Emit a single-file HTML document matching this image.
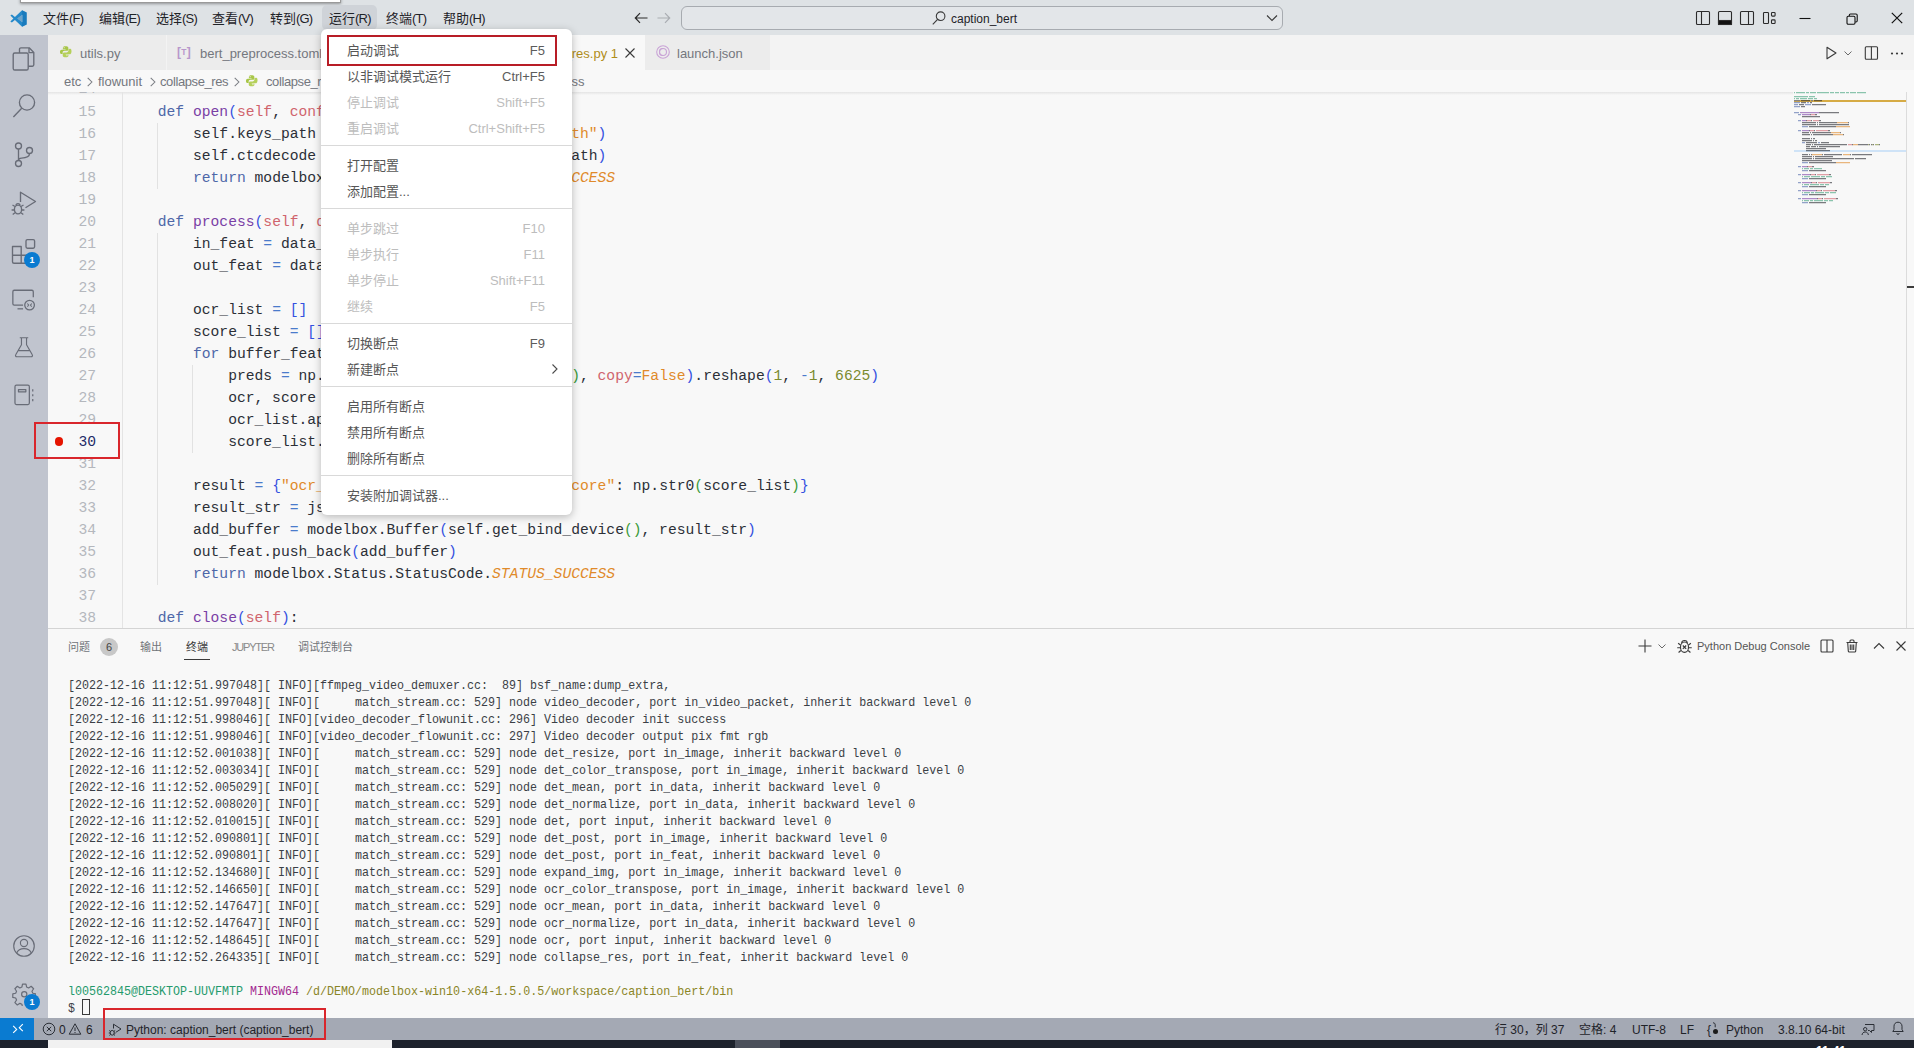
<!DOCTYPE html>
<html lang="zh-CN">
<head>
<meta charset="utf-8">
<title>caption_bert - Visual Studio Code</title>
<style>
*{box-sizing:border-box;margin:0;padding:0}
html,body{width:1914px;height:1048px;overflow:hidden;background:#f8f8f8}
body{position:relative;font-family:"Liberation Sans","Noto Sans CJK SC",sans-serif;font-size:13px;color:#333;}
.abs{position:absolute}
.ui{font-family:"Liberation Sans","Noto Sans CJK SC",sans-serif}
.mono{font-family:"Liberation Mono","Noto Sans CJK SC",monospace}
/* title bar */
#titlebar{position:absolute;left:0;top:0;width:1914px;height:35px;background:#dee2e5}
.mi{position:absolute;top:0;height:35px;line-height:37px;font-size:13px;color:#1f2328;white-space:nowrap}
/* activity bar */
#activity{position:absolute;left:0;top:35px;width:48px;height:983px;background:#c0c4ce}
/* tabs */
#tabs{position:absolute;left:48px;top:35px;width:1866px;height:35px;background:#f3f3f3}
.tab{position:absolute;top:0;height:35px;background:#ececec;line-height:37px;font-size:13px;color:#74777e;white-space:nowrap}
#crumbs{position:absolute;left:48px;top:70px;width:1866px;height:22px;background:#f8f8f8;line-height:24px;font-size:13px;color:#74777e;white-space:nowrap}
/* editor */
#editor{position:absolute;left:48px;top:92px;width:1866px;height:536px;background:#f8f8f8;overflow:hidden}
.ln{position:absolute;left:0;width:48px;text-align:right;font-size:14.66px;line-height:22px;height:22px;color:#b4b7bd;white-space:pre}
.cl{position:absolute;left:74.6px;font-size:14.66px;line-height:22px;height:22px;color:#2b2f37;white-space:pre}
.k{color:#4e67a8}.f{color:#7a3fa5}.p{color:#d0646d}.b1{color:#3450e0}.b2{color:#3a9a3a}.s{color:#e08a2a}.o{color:#4a7bcb}.n{color:#7a8a2e}.c{color:#e08a2a;font-style:italic}
/* panel */
#panel{position:absolute;left:48px;top:628px;width:1866px;height:390px;background:#f8f8f8;border-top:1px solid #d4d4d4}
.tl{position:absolute;left:20px;font-size:13px;line-height:17px;height:17px;color:#3b3f46;white-space:pre;transform-origin:0 50%;transform:scaleX(.8975)}
.ptab{top:0;font-size:11px;line-height:36px;color:#707479;white-space:nowrap}
/* status */
#status{position:absolute;left:0;top:1018px;width:1914px;height:22px;background:#a4a9b4;color:#1f2329;font-size:12px;line-height:24px;white-space:nowrap}
#taskbar{position:absolute;left:0;top:1040px;width:1914px;height:8px;background:#1d222c}
/* menu */
#menu{position:absolute;left:321px;top:29px;width:251px;height:486px;background:#fff;border-radius:6px;box-shadow:0 2px 8px rgba(0,0,0,.26)}
.it{position:absolute;left:26px;font-size:13px;line-height:27px;height:26px;color:#565656;white-space:nowrap}
.sc{position:absolute;right:27px;font-size:13px;line-height:27px;height:26px;color:#5c5c5c;white-space:nowrap}
.dis{color:#bdbdbd}
.sep{position:absolute;left:0;width:251px;height:1px;background:#d9d9d9}
</style>
</head>
<body>
<div id="titlebar">
  <!-- remnant of a popup above -->
  <div class="abs" style="left:20px;top:-4px;width:321px;height:7px;background:#fff;border:1px solid #9a9a9a;box-shadow:0 1px 3px rgba(0,0,0,.35)"></div>
  <!-- vscode logo -->
  <svg class="abs" style="left:10px;top:10px" width="17" height="17" viewBox="0 0 100 100">
    <path d="M71 2 L29 41 L11 27 L2 32 L20 50 L2 68 L11 73 L29 59 L71 98 L98 86 L98 14 Z M73 28 L73 72 L43 50 Z" fill="#2489ca" fill-rule="evenodd"/>
    <path d="M71 2 L98 14 L98 86 L71 98 Z M73 28 L73 72 L43 50 Z" fill="#1070b3" fill-rule="evenodd" opacity=".55"/>
  </svg>
  <div class="abs" style="left:322px;top:5px;width:55px;height:25px;background:#cfd3d8;border-radius:5px"></div>
  <div class="mi" style="left:43px">文件<span style="letter-spacing:-.8px">(F)</span></div>
  <div class="mi" style="left:99px">编辑<span style="letter-spacing:-.8px">(E)</span></div>
  <div class="mi" style="left:156px">选择<span style="letter-spacing:-.8px">(S)</span></div>
  <div class="mi" style="left:212px">查看<span style="letter-spacing:-.8px">(V)</span></div>
  <div class="mi" style="left:270px">转到<span style="letter-spacing:-.8px">(G)</span></div>
  <div class="mi" style="left:329px">运行<span style="letter-spacing:-.8px">(R)</span></div>
  <div class="mi" style="left:386px">终端<span style="letter-spacing:-.8px">(T)</span></div>
  <div class="mi" style="left:443px">帮助<span style="letter-spacing:-.8px">(H)</span></div>
  <!-- nav arrows -->
  <svg class="abs" style="left:633px;top:10px" width="16" height="16" viewBox="0 0 16 16" fill="none" stroke="#2b2b2b" stroke-width="1.2"><path d="M14.5 8H2.5M7 3.2 2.3 8 7 12.8"/></svg>
  <svg class="abs" style="left:656px;top:10px" width="16" height="16" viewBox="0 0 16 16" fill="none" stroke="#a9adb2" stroke-width="1.2"><path d="M1.5 8h12M9 3.2 13.7 8 9 12.8"/></svg>
  <!-- command center -->
  <div class="abs" style="left:681px;top:6px;width:602px;height:24px;border:1px solid #a7abb0;border-radius:6px;background:#e3e6e9"></div>
  <svg class="abs" style="left:931px;top:10px" width="16" height="16" viewBox="0 0 16 16" fill="none" stroke="#3a3a3a" stroke-width="1.1"><circle cx="9.6" cy="6.2" r="4.3"/><path d="M6.6 9.4 1.8 14.4"/></svg>
  <div class="abs" style="left:951px;top:0;height:35px;line-height:38px;font-size:12px;color:#1f2328;white-space:nowrap">caption_bert</div>
  <svg class="abs" style="left:1264px;top:10px" width="16" height="16" viewBox="0 0 16 16" fill="none" stroke="#3a3a3a" stroke-width="1.1"><path d="M3 5.5 8 10.5 13 5.5"/></svg>
  <!-- layout controls -->
  <svg class="abs" style="left:1695px;top:10px" width="16" height="16" viewBox="0 0 16 16" fill="none" stroke="#2b2b2b" stroke-width="1.1"><rect x="1.5" y="1.5" width="13" height="13" rx="1"/><path d="M6.5 1.5v13"/></svg>
  <svg class="abs" style="left:1717px;top:10px" width="16" height="16" viewBox="0 0 16 16" fill="none" stroke="#2b2b2b" stroke-width="1.1"><rect x="1.5" y="1.5" width="13" height="13" rx="1"/><rect x="1.5" y="10.500" width="13" height="4" fill="#111"/></svg>
  <svg class="abs" style="left:1739px;top:10px" width="16" height="16" viewBox="0 0 16 16" fill="none" stroke="#2b2b2b" stroke-width="1.1"><rect x="1.5" y="1.5" width="13" height="13" rx="1"/><path d="M9.5 1.5v13"/></svg>
  <svg class="abs" style="left:1761px;top:10px" width="16" height="16" viewBox="0 0 16 16" fill="none" stroke="#2b2b2b" stroke-width="1.1"><rect x="2.5" y="2.5" width="5" height="11" rx=".8"/><rect x="10.5" y="2.5" width="3.6" height="3.6" rx=".8"/><rect x="10.5" y="9.9" width="3.6" height="3.6" rx=".8"/></svg>
  <!-- window controls -->
  <svg class="abs" style="left:1799px;top:12px" width="12" height="12" viewBox="0 0 12 12" stroke="#111" stroke-width="1.1" fill="none"><path d="M.5 6.5h11"/></svg>
  <svg class="abs" style="left:1846px;top:12.500px" width="12" height="12" viewBox="0 0 12 12" stroke="#111" stroke-width="1.1" fill="none"><rect x="1" y="3.2" width="8" height="8" rx="1.2"/><path d="M3.3 3V2.2a1.2 1.2 0 0 1 1.2-1.2H10a1.2 1.2 0 0 1 1.2 1.2v5.6a1.2 1.2 0 0 1-1.2 1.2h-.8"/></svg>
  <svg class="abs" style="left:1891px;top:12px" width="12" height="12" viewBox="0 0 12 12" stroke="#111" stroke-width="1.2" fill="none"><path d="M.8.8l10.4 10.4M11.2.8.8 11.2"/></svg>
</div>
<div id="activity">
  <!-- files -->
  <svg class="abs" style="left:11px;top:10px" width="26" height="28" viewBox="0 0 26 28" fill="none" stroke="#686c77" stroke-width="1.35" stroke-linejoin="round"><path d="M8.5 8V4.2a1.4 1.4 0 0 1 1.4-1.4h8.3l4.6 4.6v12.4a1.4 1.4 0 0 1-1.4 1.4h-4.2"/><path d="M18 3v4.6h4.6"/><rect x="2.2" y="8" width="15" height="17" rx="1.6"/></svg>
  <!-- search -->
  <svg class="abs" style="left:11px;top:58px" width="26" height="26" viewBox="0 0 26 26" fill="none" stroke="#686c77" stroke-width="1.35"><circle cx="16" cy="9.5" r="7.6"/><path d="M10.7 15.2 2.4 24"/></svg>
  <!-- scm -->
  <svg class="abs" style="left:12px;top:106px" width="24" height="28" viewBox="0 0 24 28" fill="none" stroke="#686c77" stroke-width="1.35"><circle cx="6.5" cy="5" r="3"/><circle cx="6.5" cy="22.5" r="3"/><circle cx="17.5" cy="9.5" r="3"/><path d="M6.5 8v11.5M17.5 12.5c0 4-4 4.5-8 4.6-2 .1-3 1-3 2.4"/></svg>
  <!-- debug -->
  <svg class="abs" style="left:10px;top:154px" width="28" height="28" viewBox="0 0 28 28" fill="none" stroke="#686c77" stroke-width="1.35" stroke-linejoin="round"><path d="M10.5 13V3.2l15 9.3-10 6.2"/><ellipse cx="8" cy="20.5" rx="3.6" ry="4.4"/><path d="M5 17.5 2.5 16M11 17.5l2.5-1.5M4.4 21H1.6M11.6 21h2.8M5 23.8l-2.3 1.7M11 23.8l2.3 1.7M6 16.6a2 2 0 0 1 4 0"/></svg>
  <!-- extensions -->
  <svg class="abs" style="left:10px;top:202px" width="28" height="28" viewBox="0 0 28 28" fill="none" stroke="#686c77" stroke-width="1.35" stroke-linejoin="round"><path d="M2.5 9.5h8.7v8.7H2.5zM2.500 18.2h8.7v8h-7.2a1.500 1.500 0 0 1-1.500-1.500zM11.200 18.2h8.500v6.500a1.500 1.500 0 0 1-1.500 1.500h-7z"/><rect x="16" y="2.6" width="8.6" height="8.6" rx="1.4"/></svg>
  <div class="abs" style="left:24px;top:216.500px;width:16px;height:16px;border-radius:8px;background:#0a7bd1;color:#fff;font-size:9px;font-weight:bold;line-height:16px;text-align:center">1</div>
  <!-- remote explorer -->
  <svg class="abs" style="left:11.100px;top:251.700px" width="26" height="26" viewBox="0 0 28 28" fill="none" stroke="#686c77" stroke-width="1.35" stroke-linejoin="round"><path d="M13 19.500H3.500a1.500 1.500 0 0 1-1.500-1.500V5a1.500 1.500 0 0 1 1.500-1.500H22.500A1.500 1.500 0 0 1 24 5v6"/><path d="M7 23.500h6"/><circle cx="20" cy="19.500" r="5.200"/><path d="M17.600 17.800l1.500 1.700-1.500 1.700M22.400 17.800 20.900 19.500l1.500 1.700" stroke-width="1.100"/></svg>
  <!-- flask -->
  <svg class="abs" style="left:13px;top:300px" width="22" height="23.700" viewBox="0 0 26 28" fill="none" stroke="#686c77" stroke-width="1.35" stroke-linejoin="round"><path d="M8 3.200h10M10 3.200v8.300L3.200 23.400a1.500 1.500 0 0 0 1.300 2.300h17a1.500 1.500 0 0 0 1.300-2.300L16 11.500V3.200M6.500 18.500h13"/></svg>
  <!-- notebook -->
  <svg class="abs" style="left:12.400px;top:346.800px" width="24" height="25.800" viewBox="0 0 26 28" fill="none" stroke="#686c77" stroke-width="1.35" stroke-linejoin="round"><rect x="3.200" y="3.500" width="15.600" height="21" rx="1.600"/><path d="M7 8.200h8v2.400H7zM22.500 8v2.400M22.500 13.200v2.400M22.500 18.400v2.400"/></svg>
  <!-- account -->
  <svg class="abs" style="left:12px;top:898.5px" width="24" height="24" viewBox="0 0 28 28" fill="none" stroke="#686c77" stroke-width="1.35"><circle cx="14" cy="14" r="12"/><circle cx="14" cy="10.500" r="4.200"/><path d="M5.500 22.300c1.500-4 5-5.300 8.500-5.300s7 1.300 8.500 5.300"/></svg>
  <!-- gear -->
  <svg class="abs" style="left:11.500px;top:946.5px" width="24.500" height="24.500" viewBox="0 0 28 28" fill="none" stroke="#686c77" stroke-width="1.35" stroke-linejoin="round"><circle cx="14" cy="14" r="3"/><path d="M12 2.500h4l.7 3.300 2.300 1 2.900-1.900 2.800 2.800-1.900 2.900 1 2.300 3.300.7v4l-3.300.7-1 2.300 1.900 2.900-2.800 2.800-2.900-1.900-2.300 1-.7 3.300h-4l-.7-3.300-2.300-1-2.900 1.900-2.800-2.800 1.900-2.900-1-2.300-3.300-.7v-4l3.300-.7 1-2.300-1.900-2.900 2.800-2.800 2.900 1.900 2.300-1z"/></svg>
  <div class="abs" style="left:24px;top:959px;width:16px;height:16px;border-radius:8px;background:#0a7bd1;color:#fff;font-size:9px;font-weight:bold;line-height:16px;text-align:center">1</div>
</div>
<div id="tabs">
  <!-- python icon macro via svg -->
  <div class="tab" style="left:0;width:118px"><svg class="abs" style="left:11px;top:10px" width="13" height="13" viewBox="0 0 16 16"><path d="M7.800 1.500c-2.200 0-3 .8-3 2v1.700h3.300v.6H3.400c-1.300 0-2.200 1-2.200 2.700s.8 2.600 2 2.600h1.300V9.300c0-1.200 1-2.100 2.200-2.100h3c1 0 1.800-.8 1.800-1.800V3.500c0-1.100-1-2-2.200-2zM6.300 2.600a.6.6 0 1 1 0 1.300.6.600 0 0 1 0-1.300z" fill="#a8c648"/><path d="M11.600 5.200v1.700c0 1.300-1 2.200-2.200 2.200h-3c-1 0-1.800.8-1.800 1.800v2.300c0 1 1 1.600 2.200 1.800 1.400.2 2.600 0 3 0 1-.2 1.800-.7 1.800-1.800v-1.200H8.300v-.6h4.900c1.200 0 1.700-.9 2-2.200.3-1.300.3-2.400 0-3.200-.3-.8-.8-1.300-2-1.300zM9.800 12.400a.6.600 0 1 1 0 1.300.6.600 0 0 1 0-1.300z" fill="#b5d05a"/></svg><span class="abs" style="left:32px">utils.py</span></div>
  <div class="abs" style="left:118px;top:0;width:1px;height:35px;background:#f3f3f3"></div>
  <div class="tab" style="left:119px;width:160px"><span class="abs" style="left:10px;top:-1px;font-size:12px;font-weight:700;color:#b797cb;letter-spacing:.3px">[<span style="font-size:8.500px;position:relative;top:-1px">T</span>]</span><span class="abs" style="left:33px">bert_preprocess.toml</span></div>
  <div class="tab" style="left:280px;width:317px;background:#f8f8f8;color:#b08d18"><span class="abs" style="right:27px">collapse_res.py 1</span>
    <svg class="abs" style="left:296px;top:12px" width="12" height="12" viewBox="0 0 12 12" stroke="#3a3a3a" stroke-width="1.100" fill="none"><path d="M1.500 1.500l9 9M10.500 1.500l-9 9"/></svg></div>
  <div class="tab" style="left:597px;width:125px"><svg class="abs" style="left:10px;top:9px" width="16" height="16" viewBox="0 0 16 16" fill="none" stroke="#c9a3d6" stroke-width="1.100"><circle cx="8" cy="8" r="6.300"/><circle cx="8" cy="8" r="3.500"/><path d="M8 4.500a3.500 3.500 0 0 0 0 7"/></svg><span class="abs" style="left:32px">launch.json</span></div>
  <!-- editor actions -->
  <svg class="abs" style="left:1775px;top:10px" width="16" height="16" viewBox="0 0 16 16" fill="none" stroke="#3a3a3a" stroke-width="1.100" stroke-linejoin="round"><path d="M4 2.200 13 8l-9 5.800z"/></svg>
  <svg class="abs" style="left:1794px;top:12px" width="12" height="12" viewBox="0 0 12 12" fill="none" stroke="#6a6a6a" stroke-width="1"><path d="M2.500 4.500 6 8l3.500-3.500"/></svg>
  <svg class="abs" style="left:1815px;top:10px" width="16" height="16" viewBox="0 0 16 16" fill="none" stroke="#3a3a3a" stroke-width="1.100"><rect x="2.300" y="1.800" width="12.200" height="12.400" rx="1"/><path d="M8.400 1.800v12.400"/></svg>
  <svg class="abs" style="left:1841px;top:10px" width="16" height="16" viewBox="0 0 16 16" fill="#3a3a3a"><circle cx="3" cy="8.500" r="1.100"/><circle cx="8" cy="8.500" r="1.100"/><circle cx="13" cy="8.500" r="1.100"/></svg>
</div>
<div id="crumbs">
  <span class="abs" style="left:16px">etc</span>
<svg class="abs" style="left:38px;top:6px" width="8" height="12" viewBox="0 0 8 12" fill="none" stroke="#7a7d83" stroke-width="1.050"><path d="M1.700 1.800 5.900 6l-4.200 4.200"/></svg>
  <span class="abs" style="left:50px">flowunit</span>
<svg class="abs" style="left:100.5px;top:6px" width="8" height="12" viewBox="0 0 8 12" fill="none" stroke="#7a7d83" stroke-width="1.050"><path d="M1.700 1.800 5.900 6l-4.200 4.200"/></svg>
  <span class="abs" style="left:112px;letter-spacing:-.4px">collapse_res</span>
<svg class="abs" style="left:185px;top:6px" width="8" height="12" viewBox="0 0 8 12" fill="none" stroke="#7a7d83" stroke-width="1.050"><path d="M1.700 1.800 5.900 6l-4.200 4.200"/></svg>
<svg class="abs" style="left:197px;top:4px" width="13" height="13" viewBox="0 0 16 16"><path d="M7.800 1.500c-2.200 0-3 .8-3 2v1.700h3.300v.6H3.400c-1.300 0-2.200 1-2.200 2.700s.8 2.600 2 2.600h1.300V9.300c0-1.200 1-2.100 2.200-2.100h3c1 0 1.800-.8 1.800-1.800V3.500c0-1.100-1-2-2.200-2zM6.300 2.600a.6.600 0 1 1 0 1.300.6.600 0 0 1 0-1.300z" fill="#a8c648"/><path d="M11.600 5.200v1.700c0 1.300-1 2.200-2.200 2.200h-3c-1 0-1.800.8-1.800 1.800v2.300c0 1 1 1.600 2.200 1.800 1.400.2 2.600 0 3 0 1-.2 1.800-.7 1.800-1.800v-1.200H8.300v-.6h4.900c1.200 0 1.700-.9 2-2.200.3-1.300.3-2.400 0-3.200-.3-.8-.8-1.300-2-1.300zM9.800 12.400a.6.600 0 1 1 0 1.300.6.600 0 0 1 0-1.300z" fill="#b5d05a"/></svg>
  <span class="abs" style="left:218px;letter-spacing:-.4px">collapse_res.py</span>
  <span class="abs" style="left:330px">CollapseResFlowunit</span>
  <span class="abs" style="left:491px">process</span>
</div>
<div id="editor">
<div class="abs" style="left:0;top:0;width:1745px;height:3px;background:linear-gradient(#e4e4e4,rgba(228,228,228,0))"></div>
<div class="ln mono" style="top:-14px">14</div>
<div class="abs" style="left:74px;top:0;width:1px;height:536px;background:#e4e4e4"></div>
<div class="abs" style="left:109px;top:31px;width:1px;height:66px;background:#e2e2e2"></div>
<div class="abs" style="left:109px;top:141px;width:1px;height:352px;background:#e2e2e2"></div>
<div class="abs" style="left:144px;top:273px;width:1px;height:88px;background:#e2e2e2"></div>
<div class="ln mono" style="top:9px">15</div>
<div class="cl mono" style="top:9px">    <span class="k">def</span> <span class="f">open</span><span class="b1">(</span><span class="p">self</span>, <span class="p">config</span><span class="b1">)</span>:</div>
<div class="ln mono" style="top:31px">16</div>
<div class="cl mono" style="top:31px">        self.keys_path <span class="o">=</span> config.get_string<span class="b1">(</span><span class="s">&quot;keys_path&quot;</span><span class="b1">)</span></div>
<div class="ln mono" style="top:53px">17</div>
<div class="cl mono" style="top:53px">        self.ctcdecode <span class="o">=</span> CTCLabelDecode<span class="b1">(</span>self.keys_path<span class="b1">)</span></div>
<div class="ln mono" style="top:75px">18</div>
<div class="cl mono" style="top:75px">        <span class="k">return</span> modelbox.Status.StatusCode.<span class="c">STATUS_SUCCESS</span></div>
<div class="ln mono" style="top:97px">19</div>
<div class="ln mono" style="top:119px">20</div>
<div class="cl mono" style="top:119px">    <span class="k">def</span> <span class="f">process</span><span class="b1">(</span><span class="p">self</span>, <span class="p">data_context</span><span class="b1">)</span>:</div>
<div class="ln mono" style="top:141px">21</div>
<div class="cl mono" style="top:141px">        in_feat <span class="o">=</span> data_context.input<span class="b1">(</span><span class="s">&quot;in_feat&quot;</span><span class="b1">)</span></div>
<div class="ln mono" style="top:163px">22</div>
<div class="cl mono" style="top:163px">        out_feat <span class="o">=</span> data_context.output<span class="b1">(</span><span class="s">&quot;out_feat&quot;</span><span class="b1">)</span></div>
<div class="ln mono" style="top:185px">23</div>
<div class="ln mono" style="top:207px">24</div>
<div class="cl mono" style="top:207px">        ocr_list <span class="o">=</span> <span class="b1">[]</span></div>
<div class="ln mono" style="top:229px">25</div>
<div class="cl mono" style="top:229px">        score_list <span class="o">=</span> <span class="b1">[]</span></div>
<div class="ln mono" style="top:251px">26</div>
<div class="cl mono" style="top:251px">        <span class="k">for</span> buffer_feat <span class="k">in</span> in_feat:</div>
<div class="ln mono" style="top:273px">27</div>
<div class="cl mono" style="top:273px">            preds <span class="o">=</span> np.array<span class="b1">(</span>buffer_feat.as_object<span class="b2">()</span>, <span class="p">copy</span><span class="o">=</span><span class="s">False</span><span class="b1">)</span>.reshape<span class="b1">(</span><span class="n">1</span>, <span class="o">-</span><span class="n">1</span>, <span class="n">6625</span><span class="b1">)</span></div>
<div class="ln mono" style="top:295px">28</div>
<div class="cl mono" style="top:295px">            ocr, score <span class="o">=</span> self.ctcdecode<span class="b1">(</span>preds<span class="b1">)</span></div>
<div class="ln mono" style="top:317px">29</div>
<div class="cl mono" style="top:317px">            ocr_list.append<span class="b1">(</span>ocr<span class="b1">)</span></div>
<div class="ln mono" style="top:339px">30</div>
<div class="cl mono" style="top:339px">            score_list.append<span class="b1">(</span>score<span class="b1">)</span></div>
<div class="ln mono" style="top:361px">31</div>
<div class="ln mono" style="top:383px">32</div>
<div class="cl mono" style="top:383px">        result <span class="o">=</span> <span class="b1">{</span><span class="s">&quot;ocr_list&quot;</span>: np.str0<span class="b2">(</span>ocr_list<span class="b2">)</span>, <span class="s">&quot;score&quot;</span>: np.str0<span class="b2">(</span>score_list<span class="b2">)</span><span class="b1">}</span></div>
<div class="ln mono" style="top:405px">33</div>
<div class="cl mono" style="top:405px;width:212px;overflow:hidden">        result_str <span class="o">=</span> json.dumps<span class="b1">(</span>result<span class="b1">)</span></div>
<div class="ln mono" style="top:427px">34</div>
<div class="cl mono" style="top:427px">        add_buffer <span class="o">=</span> modelbox.Buffer<span class="b1">(</span>self.get_bind_device<span class="b2">()</span>, result_str<span class="b1">)</span></div>
<div class="ln mono" style="top:449px">35</div>
<div class="cl mono" style="top:449px">        out_feat.push_back<span class="b1">(</span>add_buffer<span class="b1">)</span></div>
<div class="ln mono" style="top:471px">36</div>
<div class="cl mono" style="top:471px">        <span class="k">return</span> modelbox.Status.StatusCode.<span class="c">STATUS_SUCCESS</span></div>
<div class="ln mono" style="top:493px">37</div>
<div class="ln mono" style="top:515px">38</div>
<div class="cl mono" style="top:515px">    <span class="k">def</span> <span class="f">close</span><span class="b1">(</span><span class="p">self</span><span class="b1">)</span>:</div>
<div class="abs" style="left:1746px;top:8px;width:113px;height:2px;background:#d6ab45"></div>
<div class="abs" style="left:1746px;top:58px;width:113px;height:2px;background:#cfe3f7"></div>
<svg class="abs" style="left:1746px;top:0" width="113" height="130" viewBox="0 0 113 130" opacity=".85" fill="none" stroke-width="1.300" stroke-dasharray=".7 .3"><path d="M0 0.65h1" stroke="#3fa37a"/><path d="M2 0.65h9" stroke="#3fa37a"/><path d="M12 0.65h3" stroke="#3fa37a"/><path d="M16 0.65h6" stroke="#3fa37a"/><path d="M23 0.65h12" stroke="#3fa37a"/><path d="M36 0.65h4" stroke="#3fa37a"/><path d="M41 0.65h4" stroke="#3fa37a"/><path d="M46 0.65h5" stroke="#3fa37a"/><path d="M52 0.65h3" stroke="#3fa37a"/><path d="M56 0.65h6" stroke="#3fa37a"/><path d="M63 0.65h9" stroke="#3fa37a"/><path d="M0 4.65h14" stroke="#3fa37a"/><path d="M15 4.65h6" stroke="#3fa37a"/><path d="M0 6.65h1" stroke="#3fa37a"/><path d="M2 6.65h3" stroke="#3fa37a"/><path d="M6 6.65h7" stroke="#3fa37a"/><path d="M14 6.65h5" stroke="#3fa37a"/><path d="M20 6.65h3" stroke="#3fa37a"/><path d="M0 8.65h6" stroke="#4e67a8"/><path d="M7 8.65h9" stroke="#23262c"/><path d="M17 8.65h2" stroke="#4e67a8"/><path d="M20 8.65h8" stroke="#23262c"/><path d="M0 10.65h6" stroke="#4e67a8"/><path d="M7 10.65h5" stroke="#23262c"/><path d="M13 10.65h2" stroke="#4e67a8"/><path d="M16 10.65h2" stroke="#23262c"/><path d="M0 12.65h4" stroke="#4e67a8"/><path d="M5 12.65h5" stroke="#23262c"/><path d="M11 12.65h6" stroke="#4e67a8"/><path d="M18 12.65h14" stroke="#23262c"/><path d="M0 14.65h6" stroke="#4e67a8"/><path d="M7 14.65h4" stroke="#23262c"/><path d="M0 20.65h5" stroke="#4e67a8"/><path d="M6 20.65h19" stroke="#7a3fa5"/><path d="M25 20.65h1" stroke="#23262c"/><path d="M26 20.65h8" stroke="#23262c"/><path d="M34 20.65h1" stroke="#23262c"/><path d="M35 20.65h8" stroke="#23262c"/><path d="M43 20.65h2" stroke="#23262c"/><path d="M4 22.65h3" stroke="#4e67a8"/><path d="M8 22.65h8" stroke="#7a3fa5"/><path d="M16 22.65h1" stroke="#23262c"/><path d="M17 22.65h4" stroke="#d0646d"/><path d="M21 22.65h2" stroke="#23262c"/><path d="M8 24.65h5" stroke="#23262c"/><path d="M13 24.65h3" stroke="#23262c"/><path d="M16 24.65h8" stroke="#23262c"/><path d="M24 24.65h2" stroke="#23262c"/><path d="M4 28.65h3" stroke="#4e67a8"/><path d="M8 28.65h4" stroke="#7a3fa5"/><path d="M12 28.65h1" stroke="#23262c"/><path d="M13 28.65h4" stroke="#d0646d"/><path d="M17 28.65h1" stroke="#23262c"/><path d="M19 28.65h6" stroke="#d0646d"/><path d="M25 28.65h2" stroke="#23262c"/><path d="M8 30.65h4" stroke="#23262c"/><path d="M12 30.65h1" stroke="#23262c"/><path d="M13 30.65h9" stroke="#23262c"/><path d="M23 30.65h1" stroke="#23262c"/><path d="M25 30.65h6" stroke="#23262c"/><path d="M31 30.65h1" stroke="#23262c"/><path d="M32 30.65h10" stroke="#23262c"/><path d="M42 30.65h1" stroke="#23262c"/><path d="M43 30.65h11" stroke="#e08a2a"/><path d="M54 30.65h1" stroke="#23262c"/><path d="M8 32.65h4" stroke="#23262c"/><path d="M12 32.65h1" stroke="#23262c"/><path d="M13 32.65h9" stroke="#23262c"/><path d="M23 32.65h1" stroke="#23262c"/><path d="M25 32.65h14" stroke="#23262c"/><path d="M39 32.65h1" stroke="#23262c"/><path d="M40 32.65h4" stroke="#23262c"/><path d="M44 32.65h1" stroke="#23262c"/><path d="M45 32.65h9" stroke="#23262c"/><path d="M54 32.65h1" stroke="#23262c"/><path d="M8 34.65h6" stroke="#4e67a8"/><path d="M15 34.65h8" stroke="#23262c"/><path d="M23 34.65h1" stroke="#23262c"/><path d="M24 34.65h6" stroke="#23262c"/><path d="M30 34.65h1" stroke="#23262c"/><path d="M31 34.65h10" stroke="#23262c"/><path d="M41 34.65h1" stroke="#23262c"/><path d="M42 34.65h14" stroke="#e08a2a"/><path d="M4 38.65h3" stroke="#4e67a8"/><path d="M8 38.65h7" stroke="#7a3fa5"/><path d="M15 38.65h1" stroke="#23262c"/><path d="M16 38.65h4" stroke="#d0646d"/><path d="M20 38.65h1" stroke="#23262c"/><path d="M22 38.65h12" stroke="#d0646d"/><path d="M34 38.65h2" stroke="#23262c"/><path d="M8 40.65h7" stroke="#23262c"/><path d="M16 40.65h1" stroke="#23262c"/><path d="M18 40.65h12" stroke="#23262c"/><path d="M30 40.65h1" stroke="#23262c"/><path d="M31 40.65h5" stroke="#23262c"/><path d="M36 40.65h1" stroke="#23262c"/><path d="M37 40.65h9" stroke="#e08a2a"/><path d="M46 40.65h1" stroke="#23262c"/><path d="M8 42.65h8" stroke="#23262c"/><path d="M17 42.65h1" stroke="#23262c"/><path d="M19 42.65h12" stroke="#23262c"/><path d="M31 42.65h1" stroke="#23262c"/><path d="M32 42.65h6" stroke="#23262c"/><path d="M38 42.65h1" stroke="#23262c"/><path d="M39 42.65h10" stroke="#e08a2a"/><path d="M49 42.65h1" stroke="#23262c"/><path d="M8 46.65h8" stroke="#23262c"/><path d="M17 46.65h1" stroke="#23262c"/><path d="M19 46.65h2" stroke="#23262c"/><path d="M8 48.65h10" stroke="#23262c"/><path d="M19 48.65h1" stroke="#23262c"/><path d="M21 48.65h2" stroke="#23262c"/><path d="M8 50.65h3" stroke="#4e67a8"/><path d="M12 50.65h11" stroke="#23262c"/><path d="M24 50.65h2" stroke="#4e67a8"/><path d="M27 50.65h7" stroke="#23262c"/><path d="M34 50.65h1" stroke="#23262c"/><path d="M12 52.65h5" stroke="#23262c"/><path d="M18 52.65h1" stroke="#23262c"/><path d="M20 52.65h2" stroke="#23262c"/><path d="M22 52.65h1" stroke="#23262c"/><path d="M23 52.65h5" stroke="#23262c"/><path d="M28 52.65h1" stroke="#23262c"/><path d="M29 52.65h11" stroke="#23262c"/><path d="M40 52.65h1" stroke="#23262c"/><path d="M41 52.65h9" stroke="#23262c"/><path d="M50 52.65h3" stroke="#23262c"/><path d="M54 52.65h4" stroke="#d0646d"/><path d="M58 52.65h1" stroke="#23262c"/><path d="M59 52.65h5" stroke="#e08a2a"/><path d="M64 52.65h2" stroke="#23262c"/><path d="M66 52.65h7" stroke="#23262c"/><path d="M73 52.65h1" stroke="#23262c"/><path d="M74 52.65h1" stroke="#7a8a2e"/><path d="M75 52.65h1" stroke="#23262c"/><path d="M77 52.65h1" stroke="#23262c"/><path d="M78 52.65h1" stroke="#7a8a2e"/><path d="M79 52.65h1" stroke="#23262c"/><path d="M81 52.65h4" stroke="#7a8a2e"/><path d="M85 52.65h1" stroke="#23262c"/><path d="M12 54.65h3" stroke="#23262c"/><path d="M15 54.65h1" stroke="#23262c"/><path d="M17 54.65h5" stroke="#23262c"/><path d="M23 54.65h1" stroke="#23262c"/><path d="M25 54.65h4" stroke="#23262c"/><path d="M29 54.65h1" stroke="#23262c"/><path d="M30 54.65h9" stroke="#23262c"/><path d="M39 54.65h1" stroke="#23262c"/><path d="M40 54.65h5" stroke="#23262c"/><path d="M45 54.65h1" stroke="#23262c"/><path d="M12 56.65h8" stroke="#23262c"/><path d="M20 56.65h1" stroke="#23262c"/><path d="M21 56.65h6" stroke="#23262c"/><path d="M27 56.65h1" stroke="#23262c"/><path d="M28 56.65h3" stroke="#23262c"/><path d="M31 56.65h1" stroke="#23262c"/><path d="M12 58.65h10" stroke="#23262c"/><path d="M22 58.65h1" stroke="#23262c"/><path d="M23 58.65h6" stroke="#23262c"/><path d="M29 58.65h1" stroke="#23262c"/><path d="M30 58.65h5" stroke="#23262c"/><path d="M35 58.65h1" stroke="#23262c"/><path d="M8 62.65h6" stroke="#23262c"/><path d="M15 62.65h1" stroke="#23262c"/><path d="M17 62.65h1" stroke="#23262c"/><path d="M18 62.65h10" stroke="#e08a2a"/><path d="M28 62.65h1" stroke="#23262c"/><path d="M30 62.65h2" stroke="#23262c"/><path d="M32 62.65h1" stroke="#23262c"/><path d="M33 62.65h4" stroke="#23262c"/><path d="M37 62.65h1" stroke="#23262c"/><path d="M38 62.65h8" stroke="#23262c"/><path d="M46 62.65h2" stroke="#23262c"/><path d="M49 62.65h7" stroke="#e08a2a"/><path d="M56 62.65h1" stroke="#23262c"/><path d="M58 62.65h2" stroke="#23262c"/><path d="M60 62.65h1" stroke="#23262c"/><path d="M61 62.65h4" stroke="#23262c"/><path d="M65 62.65h1" stroke="#23262c"/><path d="M66 62.65h10" stroke="#23262c"/><path d="M76 62.65h2" stroke="#23262c"/><path d="M8 64.65h10" stroke="#23262c"/><path d="M19 64.65h1" stroke="#23262c"/><path d="M21 64.65h4" stroke="#23262c"/><path d="M25 64.65h1" stroke="#23262c"/><path d="M26 64.65h5" stroke="#23262c"/><path d="M31 64.65h1" stroke="#23262c"/><path d="M32 64.65h6" stroke="#23262c"/><path d="M38 64.65h1" stroke="#23262c"/><path d="M8 66.65h10" stroke="#23262c"/><path d="M19 66.65h1" stroke="#23262c"/><path d="M21 66.65h8" stroke="#23262c"/><path d="M29 66.65h1" stroke="#23262c"/><path d="M30 66.65h6" stroke="#23262c"/><path d="M36 66.65h1" stroke="#23262c"/><path d="M37 66.65h4" stroke="#23262c"/><path d="M41 66.65h1" stroke="#23262c"/><path d="M42 66.65h15" stroke="#23262c"/><path d="M57 66.65h3" stroke="#23262c"/><path d="M61 66.65h10" stroke="#23262c"/><path d="M71 66.65h1" stroke="#23262c"/><path d="M8 68.65h8" stroke="#23262c"/><path d="M16 68.65h1" stroke="#23262c"/><path d="M17 68.65h9" stroke="#23262c"/><path d="M26 68.65h1" stroke="#23262c"/><path d="M27 68.65h10" stroke="#23262c"/><path d="M37 68.65h1" stroke="#23262c"/><path d="M8 70.65h6" stroke="#4e67a8"/><path d="M15 70.65h8" stroke="#23262c"/><path d="M23 70.65h1" stroke="#23262c"/><path d="M24 70.65h6" stroke="#23262c"/><path d="M30 70.65h1" stroke="#23262c"/><path d="M31 70.65h10" stroke="#23262c"/><path d="M41 70.65h1" stroke="#23262c"/><path d="M42 70.65h14" stroke="#e08a2a"/><path d="M4 74.65h3" stroke="#4e67a8"/><path d="M8 74.65h5" stroke="#7a3fa5"/><path d="M13 74.65h1" stroke="#23262c"/><path d="M14 74.65h4" stroke="#d0646d"/><path d="M18 74.65h2" stroke="#23262c"/><path d="M8 76.65h1" stroke="#3fa37a"/><path d="M10 76.65h5" stroke="#3fa37a"/><path d="M16 76.65h3" stroke="#3fa37a"/><path d="M20 76.65h8" stroke="#3fa37a"/><path d="M8 78.65h6" stroke="#4e67a8"/><path d="M15 78.65h8" stroke="#23262c"/><path d="M23 78.65h1" stroke="#23262c"/><path d="M24 78.65h6" stroke="#23262c"/><path d="M30 78.65h2" stroke="#23262c"/><path d="M4 82.65h3" stroke="#4e67a8"/><path d="M8 82.65h8" stroke="#7a3fa5"/><path d="M16 82.65h1" stroke="#23262c"/><path d="M17 82.65h4" stroke="#d0646d"/><path d="M21 82.65h1" stroke="#23262c"/><path d="M23 82.65h12" stroke="#d0646d"/><path d="M35 82.65h2" stroke="#23262c"/><path d="M8 84.65h1" stroke="#3fa37a"/><path d="M10 84.65h6" stroke="#3fa37a"/><path d="M17 84.65h9" stroke="#3fa37a"/><path d="M27 84.65h4" stroke="#3fa37a"/><path d="M32 84.65h6" stroke="#3fa37a"/><path d="M8 86.65h6" stroke="#4e67a8"/><path d="M15 86.65h8" stroke="#23262c"/><path d="M23 86.65h1" stroke="#23262c"/><path d="M24 86.65h6" stroke="#23262c"/><path d="M30 86.65h2" stroke="#23262c"/><path d="M4 90.65h3" stroke="#4e67a8"/><path d="M8 90.65h9" stroke="#7a3fa5"/><path d="M17 90.65h1" stroke="#23262c"/><path d="M18 90.65h4" stroke="#d0646d"/><path d="M22 90.65h1" stroke="#23262c"/><path d="M24 90.65h12" stroke="#d0646d"/><path d="M36 90.65h2" stroke="#23262c"/><path d="M8 92.65h1" stroke="#3fa37a"/><path d="M10 92.65h5" stroke="#3fa37a"/><path d="M16 92.65h9" stroke="#3fa37a"/><path d="M26 92.65h4" stroke="#3fa37a"/><path d="M31 92.65h4" stroke="#3fa37a"/><path d="M8 94.65h6" stroke="#4e67a8"/><path d="M15 94.65h8" stroke="#23262c"/><path d="M23 94.65h1" stroke="#23262c"/><path d="M24 94.65h6" stroke="#23262c"/><path d="M30 94.65h2" stroke="#23262c"/><path d="M4 98.65h3" stroke="#4e67a8"/><path d="M8 98.65h14" stroke="#7a3fa5"/><path d="M22 98.65h1" stroke="#23262c"/><path d="M23 98.65h4" stroke="#d0646d"/><path d="M27 98.65h1" stroke="#23262c"/><path d="M29 98.65h12" stroke="#d0646d"/><path d="M41 98.65h2" stroke="#23262c"/><path d="M8 100.65h1" stroke="#3fa37a"/><path d="M10 100.65h6" stroke="#3fa37a"/><path d="M17 100.65h3" stroke="#3fa37a"/><path d="M21 100.65h9" stroke="#3fa37a"/><path d="M31 100.65h4" stroke="#3fa37a"/><path d="M36 100.65h6" stroke="#3fa37a"/><path d="M8 102.65h6" stroke="#4e67a8"/><path d="M15 102.65h8" stroke="#23262c"/><path d="M23 102.65h1" stroke="#23262c"/><path d="M24 102.65h6" stroke="#23262c"/><path d="M30 102.65h2" stroke="#23262c"/><path d="M4 106.65h3" stroke="#4e67a8"/><path d="M8 106.65h15" stroke="#7a3fa5"/><path d="M23 106.65h1" stroke="#23262c"/><path d="M24 106.65h4" stroke="#d0646d"/><path d="M28 106.65h1" stroke="#23262c"/><path d="M30 106.65h12" stroke="#d0646d"/><path d="M42 106.65h2" stroke="#23262c"/><path d="M8 108.65h1" stroke="#3fa37a"/><path d="M10 108.65h5" stroke="#3fa37a"/><path d="M16 108.65h3" stroke="#3fa37a"/><path d="M20 108.65h9" stroke="#3fa37a"/><path d="M30 108.65h4" stroke="#3fa37a"/><path d="M35 108.65h4" stroke="#3fa37a"/><path d="M8 110.65h6" stroke="#4e67a8"/><path d="M15 110.65h8" stroke="#23262c"/><path d="M23 110.65h1" stroke="#23262c"/><path d="M24 110.65h6" stroke="#23262c"/><path d="M30 110.65h2" stroke="#23262c"/></svg>
<div class="abs" style="left:1858px;top:0;width:1px;height:536px;background:#dcdcdc"></div>
<div class="abs" style="left:1859px;top:194px;width:7px;height:2px;background:#3c3c3c"></div>
</div>
<div id="panel">
<div class="abs ptab" style="left:20px">问题</div>
<div class="abs" style="left:52px;top:9px;width:18px;height:18px;border-radius:9px;background:#c8c8c8;color:#444;font-size:11px;line-height:18px;text-align:center">6</div>
<div class="abs ptab" style="left:92px">输出</div>
<div class="abs ptab" style="left:138px;color:#3a3a3a">终端</div>
<div class="abs" style="left:136px;top:30px;width:26px;height:1px;background:#3a3a3a"></div>
<div class="abs ptab" style="left:184px;letter-spacing:-1.2px;color:#8a8a8a">JUPYTER</div>
<div class="abs ptab" style="left:250px">调试控制台</div>
<svg class="abs" style="left:1589px;top:9px" width="16" height="16" viewBox="0 0 16 16" fill="none" stroke="#3a3a3a" stroke-width="1.1"><path d="M8 1.500v13M1.500 8h13"/></svg>
<svg class="abs" style="left:1608px;top:11px" width="12" height="12" viewBox="0 0 12 12" fill="none" stroke="#6a6a6a" stroke-width="1"><path d="M2.500 4.500 6 8l3.500-3.500"/></svg>
<svg class="abs" style="left:1627px;top:7px" width="19" height="19" viewBox="0 0 17 17" fill="none" stroke="#3a3a3a" stroke-width="1.050"><ellipse cx="8.500" cy="10" rx="3.600" ry="4.600"/><path d="M6 6.500a2.500 2.500 0 0 1 5 0M4.900 8 2.800 6.500M12.100 8l2.100-1.500M4.900 10.500H2M12.100 10.500H15M5.200 13l-2 1.700M11.800 13l2 1.700M7 8.500l3 3M10 8.500l-3 3"/></svg>
<div class="abs" style="left:1649px;top:0;font-size:11px;line-height:35px;color:#555;white-space:nowrap">Python Debug Console</div>
<svg class="abs" style="left:1771px;top:9px" width="16" height="16" viewBox="0 0 16 16" fill="none" stroke="#3a3a3a" stroke-width="1.100"><rect x="2" y="2" width="12" height="12" rx="1"/><path d="M8 2v12"/></svg>
<svg class="abs" style="left:1796px;top:9px" width="16" height="16" viewBox="0 0 16 16" fill="none" stroke="#3a3a3a" stroke-width="1.100"><path d="M2.500 4.500h11M6 4.500V3a1 1 0 0 1 1-1h2a1 1 0 0 1 1 1v1.500M3.700 4.500l.6 8.600a1 1 0 0 0 1 .9h5.400a1 1 0 0 0 1-.9l.6-8.600M6.300 6.500v5.500M8 6.500v5.500M9.700 6.500v5.500"/></svg>
<svg class="abs" style="left:1823px;top:9px" width="16" height="16" viewBox="0 0 16 16" fill="none" stroke="#3a3a3a" stroke-width="1.100"><path d="M3 10.500 8 5.500l5 5"/></svg>
<svg class="abs" style="left:1847px;top:11px" width="12" height="12" viewBox="0 0 12 12" fill="none" stroke="#3a3a3a" stroke-width="1.100"><path d="M1.500 1.500l9 9M10.500 1.500l-9 9"/></svg>
<div class="tl mono" style="top:48px">[2022-12-16 11:12:51.997048][ INFO][ffmpeg_video_demuxer.cc:  89] bsf_name:dump_extra,</div>
<div class="tl mono" style="top:65px">[2022-12-16 11:12:51.997048][ INFO][     match_stream.cc: 529] node video_decoder, port in_video_packet, inherit backward level 0</div>
<div class="tl mono" style="top:82px">[2022-12-16 11:12:51.998046][ INFO][video_decoder_flowunit.cc: 296] Video decoder init success</div>
<div class="tl mono" style="top:99px">[2022-12-16 11:12:51.998046][ INFO][video_decoder_flowunit.cc: 297] Video decoder output pix fmt rgb</div>
<div class="tl mono" style="top:116px">[2022-12-16 11:12:52.001038][ INFO][     match_stream.cc: 529] node det_resize, port in_image, inherit backward level 0</div>
<div class="tl mono" style="top:133px">[2022-12-16 11:12:52.003034][ INFO][     match_stream.cc: 529] node det_color_transpose, port in_image, inherit backward level 0</div>
<div class="tl mono" style="top:150px">[2022-12-16 11:12:52.005029][ INFO][     match_stream.cc: 529] node det_mean, port in_data, inherit backward level 0</div>
<div class="tl mono" style="top:167px">[2022-12-16 11:12:52.008020][ INFO][     match_stream.cc: 529] node det_normalize, port in_data, inherit backward level 0</div>
<div class="tl mono" style="top:184px">[2022-12-16 11:12:52.010015][ INFO][     match_stream.cc: 529] node det, port input, inherit backward level 0</div>
<div class="tl mono" style="top:201px">[2022-12-16 11:12:52.090801][ INFO][     match_stream.cc: 529] node det_post, port in_image, inherit backward level 0</div>
<div class="tl mono" style="top:218px">[2022-12-16 11:12:52.090801][ INFO][     match_stream.cc: 529] node det_post, port in_feat, inherit backward level 0</div>
<div class="tl mono" style="top:235px">[2022-12-16 11:12:52.134680][ INFO][     match_stream.cc: 529] node expand_img, port in_image, inherit backward level 0</div>
<div class="tl mono" style="top:252px">[2022-12-16 11:12:52.146650][ INFO][     match_stream.cc: 529] node ocr_color_transpose, port in_image, inherit backward level 0</div>
<div class="tl mono" style="top:269px">[2022-12-16 11:12:52.147647][ INFO][     match_stream.cc: 529] node ocr_mean, port in_data, inherit backward level 0</div>
<div class="tl mono" style="top:286px">[2022-12-16 11:12:52.147647][ INFO][     match_stream.cc: 529] node ocr_normalize, port in_data, inherit backward level 0</div>
<div class="tl mono" style="top:303px">[2022-12-16 11:12:52.148645][ INFO][     match_stream.cc: 529] node ocr, port input, inherit backward level 0</div>
<div class="tl mono" style="top:320px">[2022-12-16 11:12:52.264335][ INFO][     match_stream.cc: 529] node collapse_res, port in_feat, inherit backward level 0</div>
<div class="tl mono" style="top:354px"><span style="color:#249a6c">l00562845@DESKTOP-UUVFMTP</span> <span style="color:#a32b91">MINGW64</span> <span style="color:#8a8526">/d/DEMO/modelbox-win10-x64-1.5.0.5/workspace/caption_bert/bin</span></div>
<div class="tl mono" style="top:371px">$ </div>
<div class="abs" style="left:34px;top:370px;width:7.5px;height:16px;border:1px solid #3a3a3a"></div>
</div>
<div id="status">
  <div class="abs" style="left:0;top:0;width:34px;height:22px;background:#0a7bd1"></div>
  <svg class="abs" style="left:10.500px;top:4px" width="14" height="14" viewBox="0 0 16 16" fill="none" stroke="#fff" stroke-width="1.300"><path d="M2.500 4.500 6.500 8.500 2.500 12.500M13.500 2.500 9.500 6.500 13.500 10.500"/></svg>
  <svg class="abs" style="left:42px;top:4px" width="14" height="14" viewBox="0 0 14 14" fill="none" stroke="#2b2f36" stroke-width="1"><circle cx="7" cy="7" r="5.800"/><path d="M4.800 4.800l4.400 4.400M9.200 4.800 4.800 9.200"/></svg>
  <span class="abs" style="left:59px">0</span>
  <svg class="abs" style="left:68px;top:4px" width="14" height="14" viewBox="0 0 14 14" fill="none" stroke="#2b2f36" stroke-width="1" stroke-linejoin="round"><path d="M7 1.800 12.800 12.200H1.200z"/><path d="M7 5.500v3.500M7 10v1"/></svg>
  <span class="abs" style="left:86px">6</span>
  <svg class="abs" style="left:108px;top:4px" width="15" height="15" viewBox="0 0 15 15" fill="none" stroke="#2b2f36" stroke-width="1" stroke-linejoin="round"><path d="M5.500 6.500V2.200L13 7l-5 3.200"/><ellipse cx="4.200" cy="10.800" rx="2" ry="2.400"/><path d="M2.400 9.300 1.200 8.500M6 9.300l1.200-.8M2.200 11H.8M6.200 11h1.400M2.600 12.500l-1.200.9M5.800 12.500l1.200.9"/></svg>
  <span class="abs" style="left:126px">Python: caption_bert (caption_bert)</span>
  <span class="abs" style="left:1495px">行 30，列 37</span>
  <span class="abs" style="left:1579px">空格: 4</span>
  <span class="abs" style="left:1632px">UTF-8</span>
  <span class="abs" style="left:1680px">LF</span>
  <span class="abs" style="left:1707px;font-size:12px">{</span>
  <div class="abs" style="left:1713px;top:11px;width:5px;height:5px;border-radius:3px;background:#1b1b1b"></div>
  <svg class="abs" style="left:1711px;top:4px" width="8" height="8" viewBox="0 0 8 8" fill="none" stroke="#2b2f36" stroke-width="1"><path d="M2 .8c1.500 0 2.200.8 2.200 2v2.500"/></svg>
  <span class="abs" style="left:1726px">Python</span>
  <span class="abs" style="left:1778px">3.8.10 64-bit</span>
  <svg class="abs" style="left:1860px;top:3px" width="16" height="16" viewBox="0 0 16 16" fill="none" stroke="#2b2f36" stroke-width="1" stroke-linejoin="round"><path d="M5 3.500h9v6h-2.500v2l-2-2H8"/><circle cx="5.200" cy="8.200" r="1.700"/><path d="M2 14c.3-2 1.500-3 3.200-3s2.900 1 3.200 3"/></svg>
  <svg class="abs" style="left:1890px;top:2px" width="16" height="16" viewBox="0 0 16 16" fill="none" stroke="#2b2f36" stroke-width="1" stroke-linejoin="round"><path d="M8 2.200c-2.500 0-4 1.800-4 4v3.300L2.800 11.500h10.400L12 9.500V6.200c0-2.200-1.500-4-4-4zM6.800 13.200a1.200 1.200 0 0 0 2.400 0"/></svg>
</div>
<div id="taskbar">
  <div class="abs" style="left:48px;top:0;width:344px;height:8px;background:#f1f1f1"></div>
  <div class="abs" style="left:735px;top:0;width:45px;height:8px;background:#4b505b"></div>
  <div class="abs" style="left:1816px;top:5px;font-size:12px;line-height:12px;color:#fff;font-weight:bold;white-space:nowrap">11:41</div>
</div>
<!-- red annotation for launch config in status bar -->
<div class="abs" style="left:103px;top:1007.5px;width:223px;height:32.5px;border:2px solid #d9262c"></div>
<!-- red annotation at line 30 -->
<div class="abs" style="left:34px;top:422px;width:86px;height:37px;border:2px solid #d9262c;background:linear-gradient(90deg,#c0c4ce 0,#c0c4ce 12px,#f8f8f8 12px)"></div>
<div class="abs" style="left:54.5px;top:437px;width:8.5px;height:8.5px;border-radius:5px;background:#e51400"></div>
<div class="abs mono" style="left:48px;top:431px;width:48px;text-align:right;font-size:14.66px;line-height:22px;color:#1d2a66">30</div>
<div id="menu">
<div class="it" style="top:8px">启动调试</div>
<div class="sc" style="top:8px">F5</div>
<div class="it" style="top:34px">以非调试模式运行</div>
<div class="sc" style="top:34px">Ctrl+F5</div>
<div class="it dis" style="top:60px">停止调试</div>
<div class="sc dis" style="top:60px">Shift+F5</div>
<div class="it dis" style="top:86px">重启调试</div>
<div class="sc dis" style="top:86px">Ctrl+Shift+F5</div>
<div class="sep" style="top:116px"></div>
<div class="it" style="top:123px">打开配置</div>
<div class="it" style="top:149px">添加配置...</div>
<div class="sep" style="top:179px"></div>
<div class="it dis" style="top:186px">单步跳过</div>
<div class="sc dis" style="top:186px">F10</div>
<div class="it dis" style="top:212px">单步执行</div>
<div class="sc dis" style="top:212px">F11</div>
<div class="it dis" style="top:238px">单步停止</div>
<div class="sc dis" style="top:238px">Shift+F11</div>
<div class="it dis" style="top:264px">继续</div>
<div class="sc dis" style="top:264px">F5</div>
<div class="sep" style="top:294px"></div>
<div class="it" style="top:301px">切换断点</div>
<div class="sc" style="top:301px">F9</div>
<div class="it" style="top:327px">新建断点</div>
<svg class="abs" style="left:228px;top:333px" width="12" height="14" viewBox="0 0 12 14" fill="none" stroke="#4a4a4a" stroke-width="1.1"><path d="M3.500 2.500 8 7l-4.500 4.500"/></svg>
<div class="sep" style="top:357px"></div>
<div class="it" style="top:364px">启用所有断点</div>
<div class="it" style="top:390px">禁用所有断点</div>
<div class="it" style="top:416px">删除所有断点</div>
<div class="sep" style="top:446px"></div>
<div class="it" style="top:453px">安装附加调试器...</div>
<div class="abs" style="left:6px;top:6px;width:230px;height:31px;border:2px solid #b81d26"></div>
</div>
</body>
</html>
